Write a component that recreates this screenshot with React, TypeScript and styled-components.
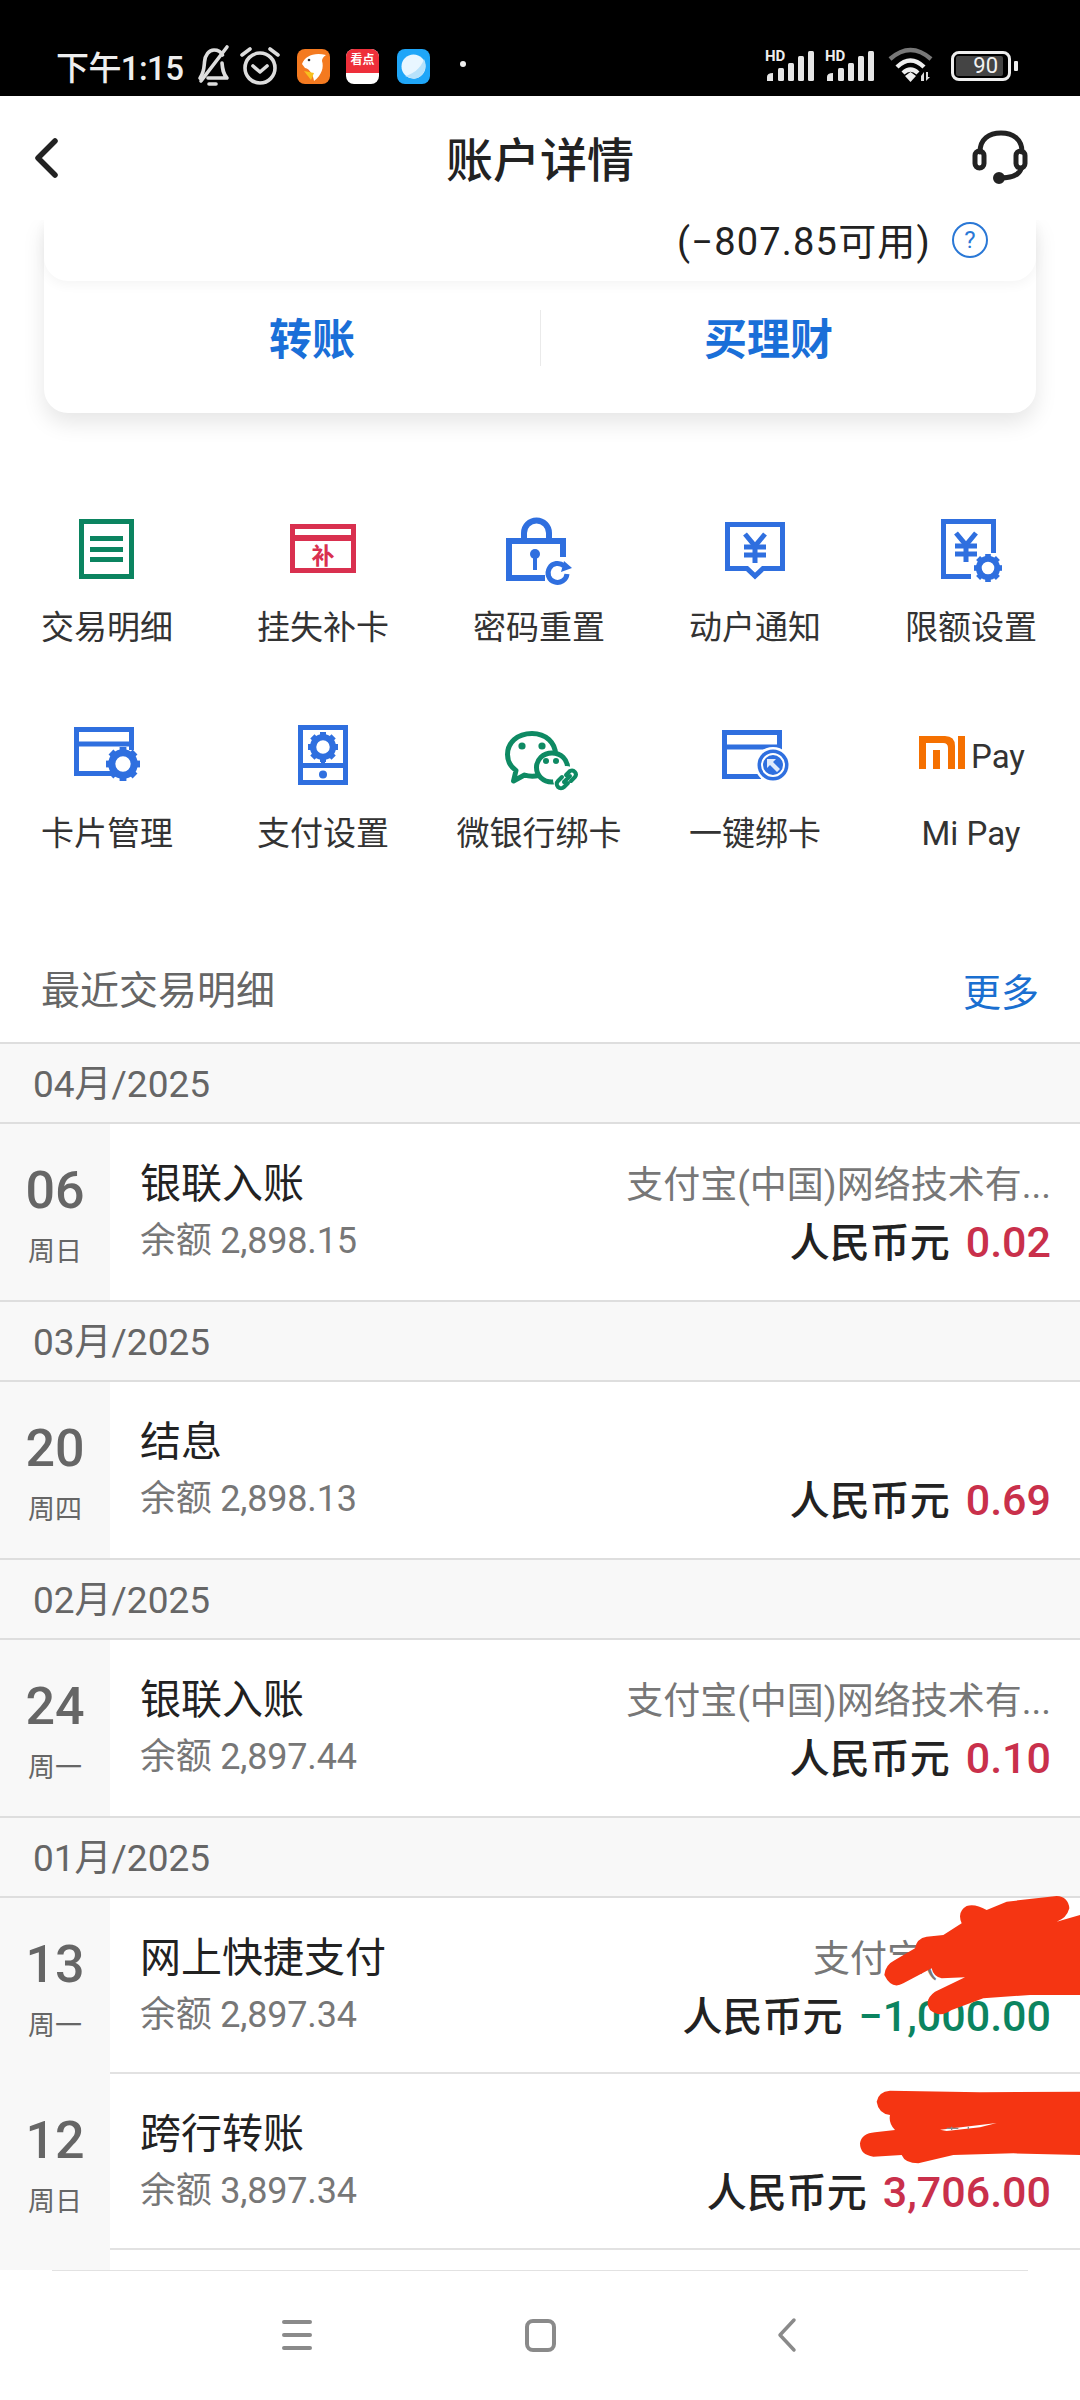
import React from "react";
import styled, { createGlobalStyle } from "styled-components";

const BLUE = "#2f6fdf";
const GREEN = "#0b8460";
const RED = "#d9304f";
const FONT = `Roboto, "Noto Sans CJK SC", sans-serif`;

const Global = createGlobalStyle`
  html, body { margin: 0; padding: 0; background: #fff; }
  * { box-sizing: border-box; }
  body { font-family: ${FONT}; }
`;

const Page = styled.div`
  position: relative;
  width: 1080px;
  height: 2400px;
  overflow: hidden;
  display: flex;
  flex-direction: column;
  background: #fff;
`;

/* ---------- status bar ---------- */
const StatusBar = styled.div`
  height: 96px;
  flex: none;
  background: #000;
  display: flex;
  align-items: center;
  padding: 36px 62px 0 56px;
  color: #eee;
`;
const Time = styled.span`
  width: 129px;
  font-size: 33px;
  font-weight: 500;
  white-space: nowrap;
  letter-spacing: -0.6px;
`;
const StatusSlot = styled.span<{ $ml: number }>`
  display: flex;
  align-items: center;
  margin-left: ${(p) => p.$ml}px;
`;
const Spacer = styled.span`
  flex: 1;
`;
const Tile = styled.span<{ $bg: string }>`
  display: block;
  width: 33px;
  height: 35px;
  border-radius: 8px;
  overflow: hidden;
  background: ${(p) => p.$bg};
`;
const TileText = styled.span`
  display: block;
  height: 24px;
  background: #ee2f3a;
  color: #fff;
  font-size: 12px;
  font-weight: 700;
  line-height: 22px;
  text-align: center;
  white-space: nowrap;
`;
const Dot = styled.span`
  display: block;
  width: 6px;
  height: 6px;
  border-radius: 50%;
  background: #eee;
  margin-top: -4px;
`;
const SignalBox = styled.span`
  position: relative;
  display: block;
  width: 50px;
  height: 32px;
`;
const HD = styled.span`
  position: absolute;
  left: 0;
  top: -1px;
  font-size: 15px;
  line-height: 14px;
  font-weight: 700;
  color: #eee;
`;
const Battery = styled.span`
  display: flex;
  align-items: center;
  gap: 3px;
`;
const BatteryBody = styled.span`
  width: 60px;
  height: 30px;
  border: 3.5px solid #eee;
  border-radius: 8px;
  padding: 2px;
  display: flex;
`;
const BatteryFill = styled.span`
  width: 47px;
  background: #444;
  border-radius: 2px;
  color: #f2f2f2;
  font-size: 22px;
  line-height: 19px;
  text-align: right;
  padding-right: 5px;
`;
const BatteryNub = styled.span`
  width: 4px;
  height: 10px;
  background: #eee;
  border-radius: 1px;
`;

/* ---------- header ---------- */
const Header = styled.header`
  position: relative;
  z-index: 2;
  height: 124px;
  flex: none;
  background: #fff;
  display: grid;
  grid-template-columns: 206px 1fr 193px;
  align-items: center;
  padding: 0 47px 0 34px;
`;
const Title = styled.h1`
  margin: 6px 0 0;
  text-align: center;
  font-size: 47px;
  font-weight: 500;
  color: #222;
  line-height: 60px;
`;
const HeaderRight = styled.div`
  display: flex;
  justify-content: flex-end;
`;

/* ---------- card ---------- */
const Card = styled.section`
  flex: none;
  margin: 0 44px;
  height: 193px;
  background: #fff;
  border-radius: 0 0 24px 24px;
  box-shadow: 0 10px 22px rgba(0, 0, 0, 0.1);
`;
const Strip = styled.div`
  height: 61px;
  border-radius: 0 0 24px 24px;
  box-shadow: 0 4px 12px rgba(0, 0, 0, 0.045);
  display: flex;
  justify-content: flex-end;
  align-items: flex-start;
  gap: 21px;
  padding: 0 48px 0 0;
  color: #222;
  font-size: 38px;
  line-height: 44px;
  letter-spacing: 1.2px;
`;
const Help = styled.span`
  width: 36px;
  height: 36px;
  margin-top: 2px;
  border: 2px solid #2a78d6;
  border-radius: 50%;
  color: #2a78d6;
  font-size: 24px;
  line-height: 32px;
  text-align: center;
  letter-spacing: 0;
`;
const Actions = styled.div`
  height: 132px;
  display: grid;
  grid-template-columns: 1fr 1fr;
  align-items: center;
  padding-bottom: 18px;
`;
const Action = styled.button<{ $divider?: boolean }>`
  all: unset;
  box-sizing: border-box;
  height: 56px;
  padding: ${(p) => (p.$divider ? "3px 40px 0 0" : "3px 0 0 40px")};
  text-align: center;
  color: #1a6fd8;
  font-family: ${FONT};
  font-size: 43px;
  font-weight: 700;
  line-height: 50px;
  border-left: ${(p) => (p.$divider ? "1px solid #eaeaea" : "none")};
`;

/* ---------- shortcuts ---------- */
const Shortcuts = styled.nav`
  flex: none;
  margin: 97px 0 0 -1px;
  display: grid;
  grid-template-columns: repeat(5, 216px);
  grid-auto-rows: 206px;
`;
const Shortcut = styled.div`
  display: flex;
  flex-direction: column;
  align-items: center;
`;
const IconSvg = styled.svg`
  display: block;
  width: 108px;
  height: 80px;
  flex: none;
`;
const ShortcutLabel = styled.span`
  margin-top: 18px;
  font-size: 33px;
  line-height: 40px;
  color: #333;
  white-space: nowrap;
`;

/* ---------- list ---------- */
const SectionHead = styled.div`
  flex: none;
  height: 120px;
  display: flex;
  justify-content: space-between;
  align-items: flex-start;
  padding: 47px 41px 0 41px;
  font-size: 39px;
  line-height: 44px;
  color: #666;
`;
const More = styled.span`
  color: #1a6fd0;
  margin-top: 2px;
  font-size: 38px;
`;
const List = styled.div`
  flex: 1;
  min-height: 0;
  overflow: hidden;
`;
const Month = styled.div`
  height: 82px;
  background: #f8f8f8;
  border-top: 2px solid #dedede;
  border-bottom: 2px solid #dedede;
  padding: 3px 0 0 33px;
  font-size: 37px;
  line-height: 75px;
  color: #666;
`;
const Row = styled.div`
  height: 176px;
  display: grid;
  grid-template-columns: 110px 1fr;
`;
const DateCol = styled.div`
  background: #f8f8f8;
  display: flex;
  flex-direction: column;
  align-items: center;
  padding-top: 37px;
`;
const Day = styled.span`
  font-size: 52px;
  line-height: 60px;
  font-weight: 500;
  color: #666;
`;
const Weekday = styled.span`
  margin-top: 13px;
  font-size: 27px;
  line-height: 36px;
  color: #666;
`;
const RowMain = styled.div<{ $line: boolean }>`
  display: flex;
  justify-content: space-between;
  padding: 0 29px 0 30px;
  border-bottom: ${(p) => (p.$line ? "2px solid #e2e2e2" : "none")};
`;
const Col = styled.div<{ $right?: boolean }>`
  display: flex;
  flex-direction: column;
  gap: ${(p) => (p.$right ? 10 : 11)}px;
  padding-top: ${(p) => (p.$right ? 39 : 37)}px;
  align-items: ${(p) => (p.$right ? "flex-end" : "flex-start")};
`;
const RowTitle = styled.span`
  font-size: 41px;
  line-height: 46px;
  color: #222;
`;
const Muted = styled.span`
  font-size: 36px;
  line-height: 46px;
  color: #777;
  white-space: nowrap;
  letter-spacing: -0.2px;
`;
const Counterparty = styled(Muted)`
  font-size: 37px;
  white-space: pre;
  letter-spacing: 0;
`;
const Amount = styled.span`
  display: flex;
  align-items: baseline;
  gap: 16px;
  height: 46px;
  font-size: 40px;
  line-height: 46px;
  font-weight: 500;
  color: #222;
`;
const Value = styled.span<{ $c: string }>`
  font-size: 43px;
  font-weight: 500;
  color: ${(p) => p.$c};
`;

/* ---------- bottom nav ---------- */
const BottomNav = styled.div`
  position: relative;
  height: 130px;
  flex: none;
  background: #fff;
  display: flex;
  align-items: flex-start;
  &::before {
    content: "";
    position: absolute;
    left: 52px;
    right: 52px;
    top: 0;
    height: 1px;
    background: #e2e2e2;
  }
`;
const NavSvg = styled.svg`
  display: block;
  width: 1080px;
  height: 130px;
`;

/* ---------- scribbles ---------- */
const Scribble = styled.svg`
  position: absolute;
  left: 780px;
  top: 1880px;
  width: 300px;
  height: 300px;
  pointer-events: none;
`;

/* ---------- drawn icons ---------- */
const Gear = ({ cx, cy, r, c = BLUE }: { cx: number; cy: number; r: number; c?: string }) => (
  <g>
    <circle cx={cx} cy={cy} r={r * 0.66} fill="none" stroke={c} strokeWidth={r * 0.42} />
    {[0, 45, 90, 135, 180, 225, 270, 315].map((a) => (
      <rect
        key={a}
        x={cx - r * 0.2}
        y={cy - r}
        width={r * 0.4}
        height={r * 0.4}
        fill={c}
        transform={`rotate(${a} ${cx} ${cy})`}
      />
    ))}
  </g>
);

const Yen = ({ x, y, s = 1 }: { x: number; y: number; s?: number }) => (
  <g transform={`translate(${x} ${y}) scale(${s})`} fill="none" stroke={BLUE} strokeWidth={5}>
    <path d="M-10 1 L0 13 L10 1" />
    <path d="M-11 14 H11 M-11 22 H11 M0 12 V30" />
  </g>
);

const DetailIcon = () => (
  <IconSvg viewBox="0 0 108 80">
    <rect x="28.5" y="11.5" width="50" height="55" fill="none" stroke={GREEN} strokeWidth="5" />
    <path d="M37 28.5 H70 M37 39.5 H70 M37 49.5 H70" stroke={GREEN} strokeWidth="5" />
  </IconSvg>
);
const LossIcon = () => (
  <IconSvg viewBox="0 0 108 80">
    <rect x="23.5" y="16.5" width="61" height="44" fill="none" stroke={RED} strokeWidth="5" />
    <path d="M23 28 H85" stroke={RED} strokeWidth="6" />
    <text x="54" y="54" textAnchor="middle" fontSize="23" fontWeight="700" fill={RED} fontFamily={FONT}>
      补
    </text>
  </IconSvg>
);
const LockIcon = () => (
  <IconSvg viewBox="0 0 108 80">
    <g fill="none" stroke={BLUE} strokeWidth="6">
      <path d="M78 47 V31 H24 V68 H60" />
      <path d="M39 29 V23 A12.5 12.5 0 0 1 64 23 V29" />
      <path d="M79 56 A9.5 9.5 0 1 0 82 64" strokeWidth="5" />
    </g>
    <circle cx="50" cy="44" r="5" fill={BLUE} />
    <rect x="48" y="44" width="4" height="16" fill={BLUE} />
    <polygon points="87,58 79,51 76,62" fill={BLUE} />
  </IconSvg>
);
const NoticeIcon = () => (
  <IconSvg viewBox="0 0 108 80">
    <path d="M26.5 14.5 H81.5 V58.5 H62 L54 66 L46 58.5 H26.5 Z" fill="none" stroke={BLUE} strokeWidth="5" />
    <Yen x={54} y={23} />
  </IconSvg>
);
const LimitIcon = () => (
  <IconSvg viewBox="0 0 108 80">
    <path d="M76.5 43 V11.5 H26.5 V66.5 H54" fill="none" stroke={BLUE} strokeWidth="5" />
    <Yen x={49} y={22} />
    <Gear cx={71} cy={58} r={14} />
  </IconSvg>
);
const CardGearIcon = () => (
  <IconSvg viewBox="0 0 108 80">
    <path d="M60 57.5 H23.5 V13.5 H78.5 V28 H23.5" fill="none" stroke={BLUE} strokeWidth="5" />
    <path d="M78.5 26 V34" stroke={BLUE} strokeWidth="5" />
    <Gear cx={70} cy={48} r={17} />
  </IconSvg>
);
const PaySetIcon = () => (
  <IconSvg viewBox="0 0 108 80">
    <rect x="31.5" y="11.5" width="45" height="55" fill="none" stroke={BLUE} strokeWidth="5" />
    <rect x="30" y="47" width="48" height="5" fill={BLUE} />
    <rect x="52" y="40" width="4" height="8" fill={BLUE} />
    <Gear cx={54} cy={31} r={15} />
    <circle cx="54" cy="58.5" r="4" fill={BLUE} />
  </IconSvg>
);
const WeChatIcon = () => (
  <IconSvg viewBox="0 0 108 80">
    <path
      d="M47 17.5 C32 17.5 22.5 27 22.5 38.5 C22.5 45.5 26 51 31 54.5 L28.5 65 L39.5 59 C44 60.5 49 60.5 54 59.5 C64 57 70.5 48 70.5 38.5 C70.5 27 61 17.5 47 17.5 Z"
      fill="none"
      stroke="#0e8a63"
      strokeWidth="5"
      strokeLinejoin="round"
    />
    <circle cx="37" cy="30" r="3.6" fill="#0e8a63" />
    <circle cx="57" cy="30" r="3.6" fill="#0e8a63" />
    <path
      d="M67 37 C58 37 51.5 43.5 51.5 51.5 C51.5 59.5 58 66 67 66 C76 66 82.5 59.5 82.5 51.5 C82.5 43.5 76 37 67 37 Z"
      fill="#fff"
      stroke="#0e8a63"
      strokeWidth="5"
    />
    <circle cx="61" cy="45" r="3" fill="#0e8a63" />
    <circle cx="71" cy="45" r="3" fill="#0e8a63" />
    <circle cx="81" cy="63" r="13" fill="#fff" />
    <g fill="none" stroke="#0e8a63" strokeWidth="4" strokeLinecap="round">
      <path d="M81 59 L85 55 A4 4 0 0 1 90 61 L86 65" />
      <path d="M83 67 L79 71 A4 4 0 0 1 73 65 L77 61" />
      <path d="M79 66 L85 60" />
    </g>
  </IconSvg>
);
const BindIcon = () => (
  <IconSvg viewBox="0 0 108 80">
    <path d="M60 60.5 H23.5 V16.5 H78.5 V31 H23.5" fill="none" stroke={BLUE} strokeWidth="5" />
    <path d="M78.5 29 V36" stroke={BLUE} strokeWidth="5" />
    <circle cx="72" cy="49" r="18" fill="#fff" />
    <circle cx="72" cy="49" r="15.5" fill={BLUE} />
    <circle cx="72" cy="49" r="11" fill="none" stroke="#fff" strokeWidth="2" />
    <path d="M66 43 H75 L72 46 L79 53 L76 56 L69 49 L66 52 Z" fill="#dfe9fb" />
  </IconSvg>
);
const MiPayIcon = () => (
  <IconSvg viewBox="0 0 108 80">
    <path
      d="M2 53 V20 H28 Q38 20 38 30 V53 H31 V32 Q31 27 26 27 H9 V53 Z M16 34 H23 V53 H16 Z M41 20 H48 V53 H41 Z"
      fill="#f57000"
    />
    <text x="54" y="52" fontSize="33" fill="#333" fontFamily={FONT}>
      Pay
    </text>
  </IconSvg>
);

const shortcuts: [React.ReactNode, string][] = [
  [<DetailIcon />, "交易明细"],
  [<LossIcon />, "挂失补卡"],
  [<LockIcon />, "密码重置"],
  [<NoticeIcon />, "动户通知"],
  [<LimitIcon />, "限额设置"],
  [<CardGearIcon />, "卡片管理"],
  [<PaySetIcon />, "支付设置"],
  [<WeChatIcon />, "微银行绑卡"],
  [<BindIcon />, "一键绑卡"],
  [<MiPayIcon />, "Mi Pay"],
];

const ALIPAY = "支付宝(中国)网络技术有...";
const C_RED = "#c9304b";
type Tx = { d: string; w: string; t: string; b: string; s?: string; v: string; c: string; line?: boolean };
const groups: { m: string; rows: Tx[] }[] = [
  { m: "04月/2025", rows: [{ d: "06", w: "周日", t: "银联入账", b: "余额 2,898.15", s: ALIPAY, v: "0.02", c: C_RED }] },
  { m: "03月/2025", rows: [{ d: "20", w: "周四", t: "结息", b: "余额 2,898.13", v: "0.69", c: C_RED }] },
  { m: "02月/2025", rows: [{ d: "24", w: "周一", t: "银联入账", b: "余额 2,897.44", s: ALIPAY, v: "0.10", c: C_RED }] },
  {
    m: "01月/2025",
    rows: [
      { d: "13", w: "周一", t: "网上快捷支付", b: "余额 2,897.34", s: "支付宝(中国)   ", v: "−1,000.00", c: GREEN, line: true },
      { d: "12", w: "周日", t: "跨行转账", b: "余额 3,897.34", v: "3,706.00", c: C_RED, line: true },
      { d: "", w: "", t: "", b: "", v: "", c: C_RED },
    ],
  },
];

const Signal = () => (
  <SignalBox>
    <HD>HD</HD>
    <svg width="50" height="32" viewBox="0 0 50 32" style={{ display: "block" }}>
      <g fill="#e6e6e6">
        <path d="M2 31 V27 Q2 23 8 23 V31 Z" />
        <rect x="13" y="18" width="6" height="13" rx="1.5" />
        <rect x="23" y="13" width="6" height="18" rx="1.5" />
        <rect x="33" y="6" width="6" height="25" rx="1.5" />
        <rect x="43" y="1" width="6" height="30" rx="1.5" />
      </g>
    </svg>
  </SignalBox>
);

export default function App() {
  return (
    <Page>
      <Global />
      <StatusBar>
        <Time>下午1:15</Time>
        <StatusSlot $ml={9}>
          <svg width="36" height="44" viewBox="0 0 36 44" fill="none" stroke="#ddd" strokeWidth="3.6" strokeLinecap="round" strokeLinejoin="round">
            <path d="M6 34 C10 29 10 24 10.5 18 C11 11 15 6 20 6 C24 6 27 8 28.5 11" />
            <path d="M28 19 C28.5 25 29 30 33 34 H14" />
            <path d="M33 3 L7 37" />
            <path d="M15 40 H22" />
          </svg>
        </StatusSlot>
        <StatusSlot $ml={9}>
          <svg width="42" height="42" viewBox="0 0 42 42" fill="none" stroke="#ddd" strokeWidth="3.6" strokeLinecap="round" strokeLinejoin="round">
            <circle cx="21" cy="23" r="15" />
            <path d="M14 21 L21 27 L28 21" />
            <path d="M3 10 L11 4 M39 10 L31 4" />
          </svg>
        </StatusSlot>
        <StatusSlot $ml={16}>
          <Tile $bg="#f47a20">
            <svg width="33" height="35" viewBox="0 0 33 35">
              <path d="M5 15 C8 7 17 3 29 6 C26 8 25 10 25 12 C27 18 25 26 17 32 C16 26 13 20 8 19 Z" fill="#fff" />
              <path d="M7 22 L17 24 L14 31 Z" fill="#f7c11e" />
              <circle cx="12" cy="11" r="1.3" fill="#333" />
            </svg>
          </Tile>
        </StatusSlot>
        <StatusSlot $ml={16}>
          <Tile $bg="#fff">
            <TileText>看点</TileText>
          </Tile>
        </StatusSlot>
        <StatusSlot $ml={18}>
          <Tile $bg="#1fa6f8">
            <svg width="33" height="35" viewBox="0 0 33 35">
              <circle cx="16.5" cy="17.5" r="12" fill="#e8f6ff" />
              <path d="M8 27 C14 26 24 20 27 10 C31 18 27 28 17 30 Z" fill="#b7e2fb" />
            </svg>
          </Tile>
        </StatusSlot>
        <StatusSlot $ml={30}>
          <Dot />
        </StatusSlot>
        <Spacer />
        <Signal />
        <StatusSlot $ml={10}>
          <Signal />
        </StatusSlot>
        <StatusSlot $ml={13}>
          <svg width="46" height="40" viewBox="0 0 46 40" fill="none" strokeWidth="4.4">
            <path d="M2 13 Q22.5 -5 43 13" stroke="#777" />
            <path d="M9 21 Q22.5 8 36 21" stroke="#eee" />
            <path d="M15 27 Q22.5 20 30 27" stroke="#eee" />
            <path d="M17 30 L22.5 26 L28 30 L22.5 36 Z" fill="#eee" stroke="none" />
            <path d="M33 35 V30 L36 26 V35 Z M38 26 V35 L42 31 H40 V26 Z" fill="#ddd" stroke="none" />
          </svg>
        </StatusSlot>
        <StatusSlot $ml={17}>
          <Battery>
            <BatteryBody>
              <BatteryFill>90</BatteryFill>
            </BatteryBody>
            <BatteryNub />
          </Battery>
        </StatusSlot>
      </StatusBar>

      <Header>
        <svg width="30" height="46" viewBox="0 0 30 46" fill="none" stroke="#222" strokeWidth="5.5" strokeLinecap="round" strokeLinejoin="round">
          <path d="M21 6 L4 23 L21 40" />
        </svg>
        <Title>账户详情</Title>
        <HeaderRight>
          <svg width="64" height="60" viewBox="0 0 64 60" fill="none" stroke="#222" strokeWidth="5" strokeLinecap="round">
            <path d="M11 24 C11 11 20 5 32 5 C44 5 53 11 53 24" />
            <rect x="6" y="23" width="9" height="17" rx="4.5" />
            <rect x="47" y="23" width="9" height="17" rx="4.5" />
            <path d="M52 41 C50 47 42 50 31 50" />
            <circle cx="30" cy="50" r="3.5" fill="#222" />
          </svg>
        </HeaderRight>
      </Header>

      <Card>
        <Strip>
          <span>(−807.85可用)</span>
          <Help>?</Help>
        </Strip>
        <Actions>
          <Action>转账</Action>
          <Action $divider>买理财</Action>
        </Actions>
      </Card>

      <Shortcuts>
        {shortcuts.map(([icon, label]) => (
          <Shortcut key={label}>
            {icon}
            <ShortcutLabel>{label}</ShortcutLabel>
          </Shortcut>
        ))}
      </Shortcuts>

      <SectionHead>
        <span>最近交易明细</span>
        <More>更多</More>
      </SectionHead>

      <List>
        {groups.map((g) => (
          <React.Fragment key={g.m}>
            <Month>{g.m}</Month>
            {g.rows.map((r, i) => (
              <Row key={i}>
                <DateCol>
                  <Day>{r.d}</Day>
                  <Weekday>{r.w}</Weekday>
                </DateCol>
                <RowMain $line={!!r.line}>
                  <Col>
                    <RowTitle>{r.t}</RowTitle>
                    <Muted>{r.b}</Muted>
                  </Col>
                  {r.v && (
                    <Col $right>
                      <Counterparty>{r.s ?? "\u00a0"}</Counterparty>
                      <Amount>
                        人民币元
                        <Value $c={r.c}>{r.v}</Value>
                      </Amount>
                    </Col>
                  )}
                </RowMain>
              </Row>
            ))}
          </React.Fragment>
        ))}
      </List>

      <BottomNav>
        <NavSvg viewBox="0 0 1080 130" fill="none" stroke="#8a8a8a" strokeWidth="4" strokeLinecap="round" strokeLinejoin="round">
          <path d="M284 52 H310 M284 65 H310 M284 78 H310" />
          <rect x="527" y="51" width="27" height="29" rx="6" />
          <path d="M794 50 L780 65 L794 80" strokeWidth="3.5" />
        </NavSvg>
      </BottomNav>

      <Scribble viewBox="0 0 900 900">
        <path
          fill="#f53512"
          d="M313 285 Q315 255 345 240 L405 205 Q410 175 440 170 L490 165 L545 130 Q530 95 560 78 Q585 70 620 90 L680 65 L830 48 Q865 50 868 85 Q860 115 830 125 L900 105 L900 345 L750 345 L610 355 L515 390 Q480 415 450 390 Q430 360 465 335 L555 292 L485 295 Q460 290 455 265 L370 310 Q335 330 313 285 Z"
        />
        <path
          fill="#f53512"
          d="M290 665 Q295 635 330 632 L600 637 L900 635 L900 825 L700 820 L520 825 L415 850 Q375 850 365 825 L280 830 Q240 825 240 790 Q245 760 285 757 L345 750 Q325 730 330 705 Q295 700 290 665 Z"
        />
        <path fill="#fff" d="M480 749 L650 729 L600 742 L500 753 Z" />
        <path d="M500 745 H535 M515 740 V750 M565 740 V748" stroke="#888" strokeWidth="4" />
      </Scribble>
    </Page>
  );
}
